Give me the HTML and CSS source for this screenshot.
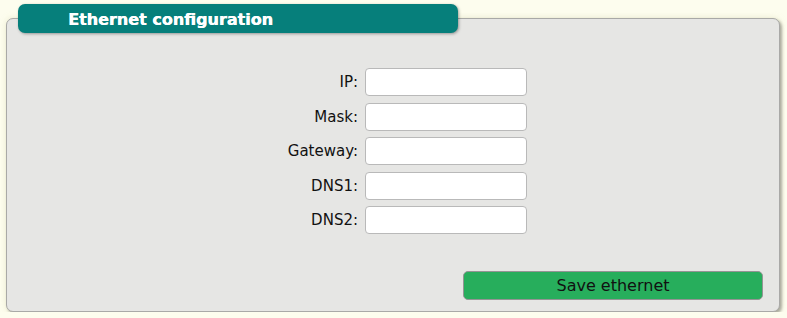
FILE: index.html
```html
<!DOCTYPE html>
<html>
<head>
    <title>Ethernet configuration</title>
    <link rel="stylesheet" href="styles.css">
</head>
<body>
    <div class="box">
        <div class="box-title">Ethernet configuration</div>
        <div class="panel">
            <div class="form-grid">
                <label for="ip">IP:</label>
                <input type="text" id="ip">
                <label for="mask">Mask:</label>
                <input type="text" id="mask">
                <label for="gateway">Gateway:</label>
                <input type="text" id="gateway">
                <label for="dns1">DNS1:</label>
                <input type="text" id="dns1">
                <label for="dns2">DNS2:</label>
                <input type="text" id="dns2">
            </div>
            <div class="actions">
                <button class="save-btn">Save ethernet</button>
            </div>
        </div>
    </div>
</body>
</html>
```

FILE: styles.css
```css
body {
    margin: 0;
    background-color: #fdfdee;
    font-family: "DejaVu Sans", Verdana, sans-serif;
    color: #111;
}
.box {
    padding: 4px 7px 0 6px;
}
.box-title {
    position: relative;
    z-index: 1;
    margin-left: 12px;
    width: 390px;
    height: 29px;
    line-height: 31px;
    padding-left: 50px;
    background-color: #067f7b;
    color: #fff;
    font-weight: bold;
    font-size: 16px;
    text-shadow: 0.4px 0 0 #fff;
    border-radius: 7px;
    box-shadow: 1px 1px 3px rgba(0,0,0,0.35);
}
.panel {
    margin-top: -15px;
    height: 294px;
    box-sizing: border-box;
    background-color: #e6e6e4;
    border: 1px solid #a9a9a7;
    border-radius: 7px;
    box-shadow: 2px 2px 3px rgba(0,0,0,0.3), 0 0 6px rgba(200,200,150,0.35);
    padding-top: 49px;
    display: flex;
    flex-direction: column;
}
.form-grid {
    display: grid;
    grid-template-columns: 80px 162px;
    column-gap: 7px;
    row-gap: 6.5px;
    margin-left: 271px;
    align-items: center;
}
.form-grid label {
    text-align: right;
    font-size: 15px;
}
.form-grid input {
    height: 28px;
    box-sizing: border-box;
    border: 1px solid #b9b9b9;
    border-radius: 4px;
    background: #fff;
    padding: 2px 6px;
    margin: 0;
}
.actions {
    margin-top: auto;
    padding: 0 16px 11px 0;
    display: flex;
    justify-content: flex-end;
}
.save-btn {
    width: 300px;
    height: 29px;
    background-color: #27ae5c;
    border: 1px solid #949494;
    border-radius: 5px;
    color: #111;
    font-family: "DejaVu Sans", Verdana, sans-serif;
    font-size: 16px;
    padding: 0;
}
```
